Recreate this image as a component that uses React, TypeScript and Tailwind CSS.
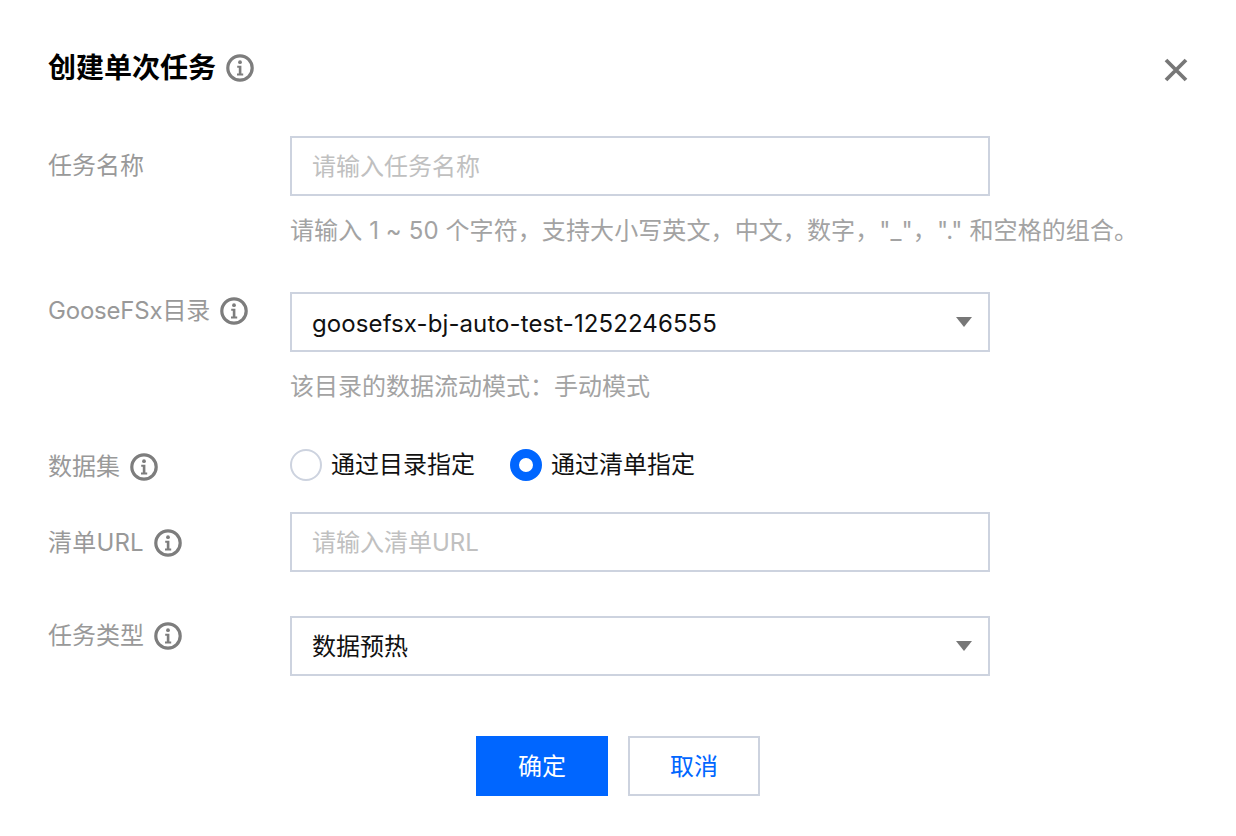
import React from "react";

function Info({ className = "" }: { className?: string }) {
  return (
    <svg className={"shrink-0 " + className} width="28" height="28" viewBox="0 0 28 28" fill="none">
      <circle cx="14" cy="14" r="12.2" stroke="#7d7d7d" strokeWidth="3.2" />
      <circle cx="14" cy="8.2" r="1.9" fill="#7d7d7d" />
      <path d="M11.2 11.8h4.2v7.8h1.8v1.9h-6.2v-1.9h1.8v-5.9h-1.6z" fill="#7d7d7d" />
    </svg>
  );
}

function Label({ text, info, textClass = "" }: { text: string; info?: boolean; textClass?: string }) {
  return (
    <div className="w-[242px] shrink-0 flex items-center text-[24px] leading-[36px] text-[#999999]">
      <span className={textClass}>{text}</span>
      {info && <Info className="ml-[10px]" />}
    </div>
  );
}

function Field({ placeholder }: { placeholder: string }) {
  return (
    <input
      readOnly
      placeholder={placeholder}
      className="w-[700px] h-[60px] border-2 border-[#cdd3df] px-[20px] text-[24px] outline-none placeholder:text-[#c0c0c0] bg-white"
    />
  );
}

function Select({ value, textClass = "" }: { value: string; textClass?: string }) {
  return (
    <div className="w-[700px] h-[60px] border-2 border-[#cdd3df] pl-[20px] pr-[16px] flex items-center justify-between text-[24px] text-[#111111]">
      <span className={textClass}>{value}</span>
      <svg width="16" height="10" viewBox="0 0 16 10"><path d="M0 0h16l-8 10z" fill="#777" /></svg>
    </div>
  );
}

export default function App() {
  return (
    <div className="w-[1236px] h-[836px] bg-white overflow-hidden px-[48px] pt-[46px] font-['Inter','Noto_Sans_CJK_SC',sans-serif]">
      <div className="h-[44px] flex items-center justify-between">
        <div className="flex items-center">
          <span className="text-[28px] leading-[42px] font-semibold text-black">创建单次任务</span>
          <Info className="ml-[10px]" />
        </div>
        <svg width="24" height="24" viewBox="0 0 24 24" className="mt-[3px]">
          <path d="M2 2l20 20M22 2L2 22" stroke="#777" strokeWidth="3.8" />
        </svg>
      </div>

      <div className="mt-[46px] flex">
        <div className="pt-[12px]"><Label text="任务名称" /></div>
        <Field placeholder="请输入任务名称" />
      </div>
      <div className="ml-[242px] mt-[17px] text-[24px] leading-[36px] tracking-[0.1px] text-[#a3a3a3] whitespace-nowrap">
        请输入 1 ~ 50 个字符，支持大小写英文，中文，数字，"_"，"." 和空格的组合。
      </div>

      <div className="mt-[43px] flex">
        <div className="pt-[1px]"><Label text="GooseFSx目录" info textClass="tracking-[-0.2px]" /></div>
        <Select value="goosefsx-bj-auto-test-1252246555" textClass="pt-[3px] tracking-[0.1px]" />
      </div>
      <div className="ml-[242px] mt-[17px] text-[24px] leading-[36px] text-[#a3a3a3]">该目录的数据流动模式：手动模式</div>

      <div className="mt-[38px] flex h-[44px]">
        <div className="pt-[6px]"><Label text="数据集" info /></div>
        <div className="flex items-center text-[24px] text-[#111111]">
          <span className="w-[32px] h-[32px] rounded-full border-2 border-[#cdd3df] mr-[9px]" />
          <span>通过目录指定</span>
          <span className="w-[32px] h-[32px] rounded-full border-[9px] border-[#0066ff] ml-[35px] mr-[9px]" />
          <span>通过清单指定</span>
        </div>
      </div>

      <div className="mt-[25px] flex">
        <div className="pt-[13px]"><Label text="清单URL" info textClass="tracking-[0.2px]" /></div>
        <Field placeholder="请输入清单URL" />
      </div>

      <div className="mt-[44px] flex">
        <div className="pt-[2px]"><Label text="任务类型" info /></div>
        <Select value="数据预热" textClass="pt-[1px]" />
      </div>

      <div className="mt-[60px] flex justify-center gap-[20px]">
        <button className="w-[132px] h-[60px] pt-[2px] bg-[#0066ff] text-white text-[24px]">确定</button>
        <button className="w-[132px] h-[60px] pt-[2px] border-2 border-[#cdd3df] text-[#0066ff] text-[24px]">取消</button>
      </div>
    </div>
  );
}
